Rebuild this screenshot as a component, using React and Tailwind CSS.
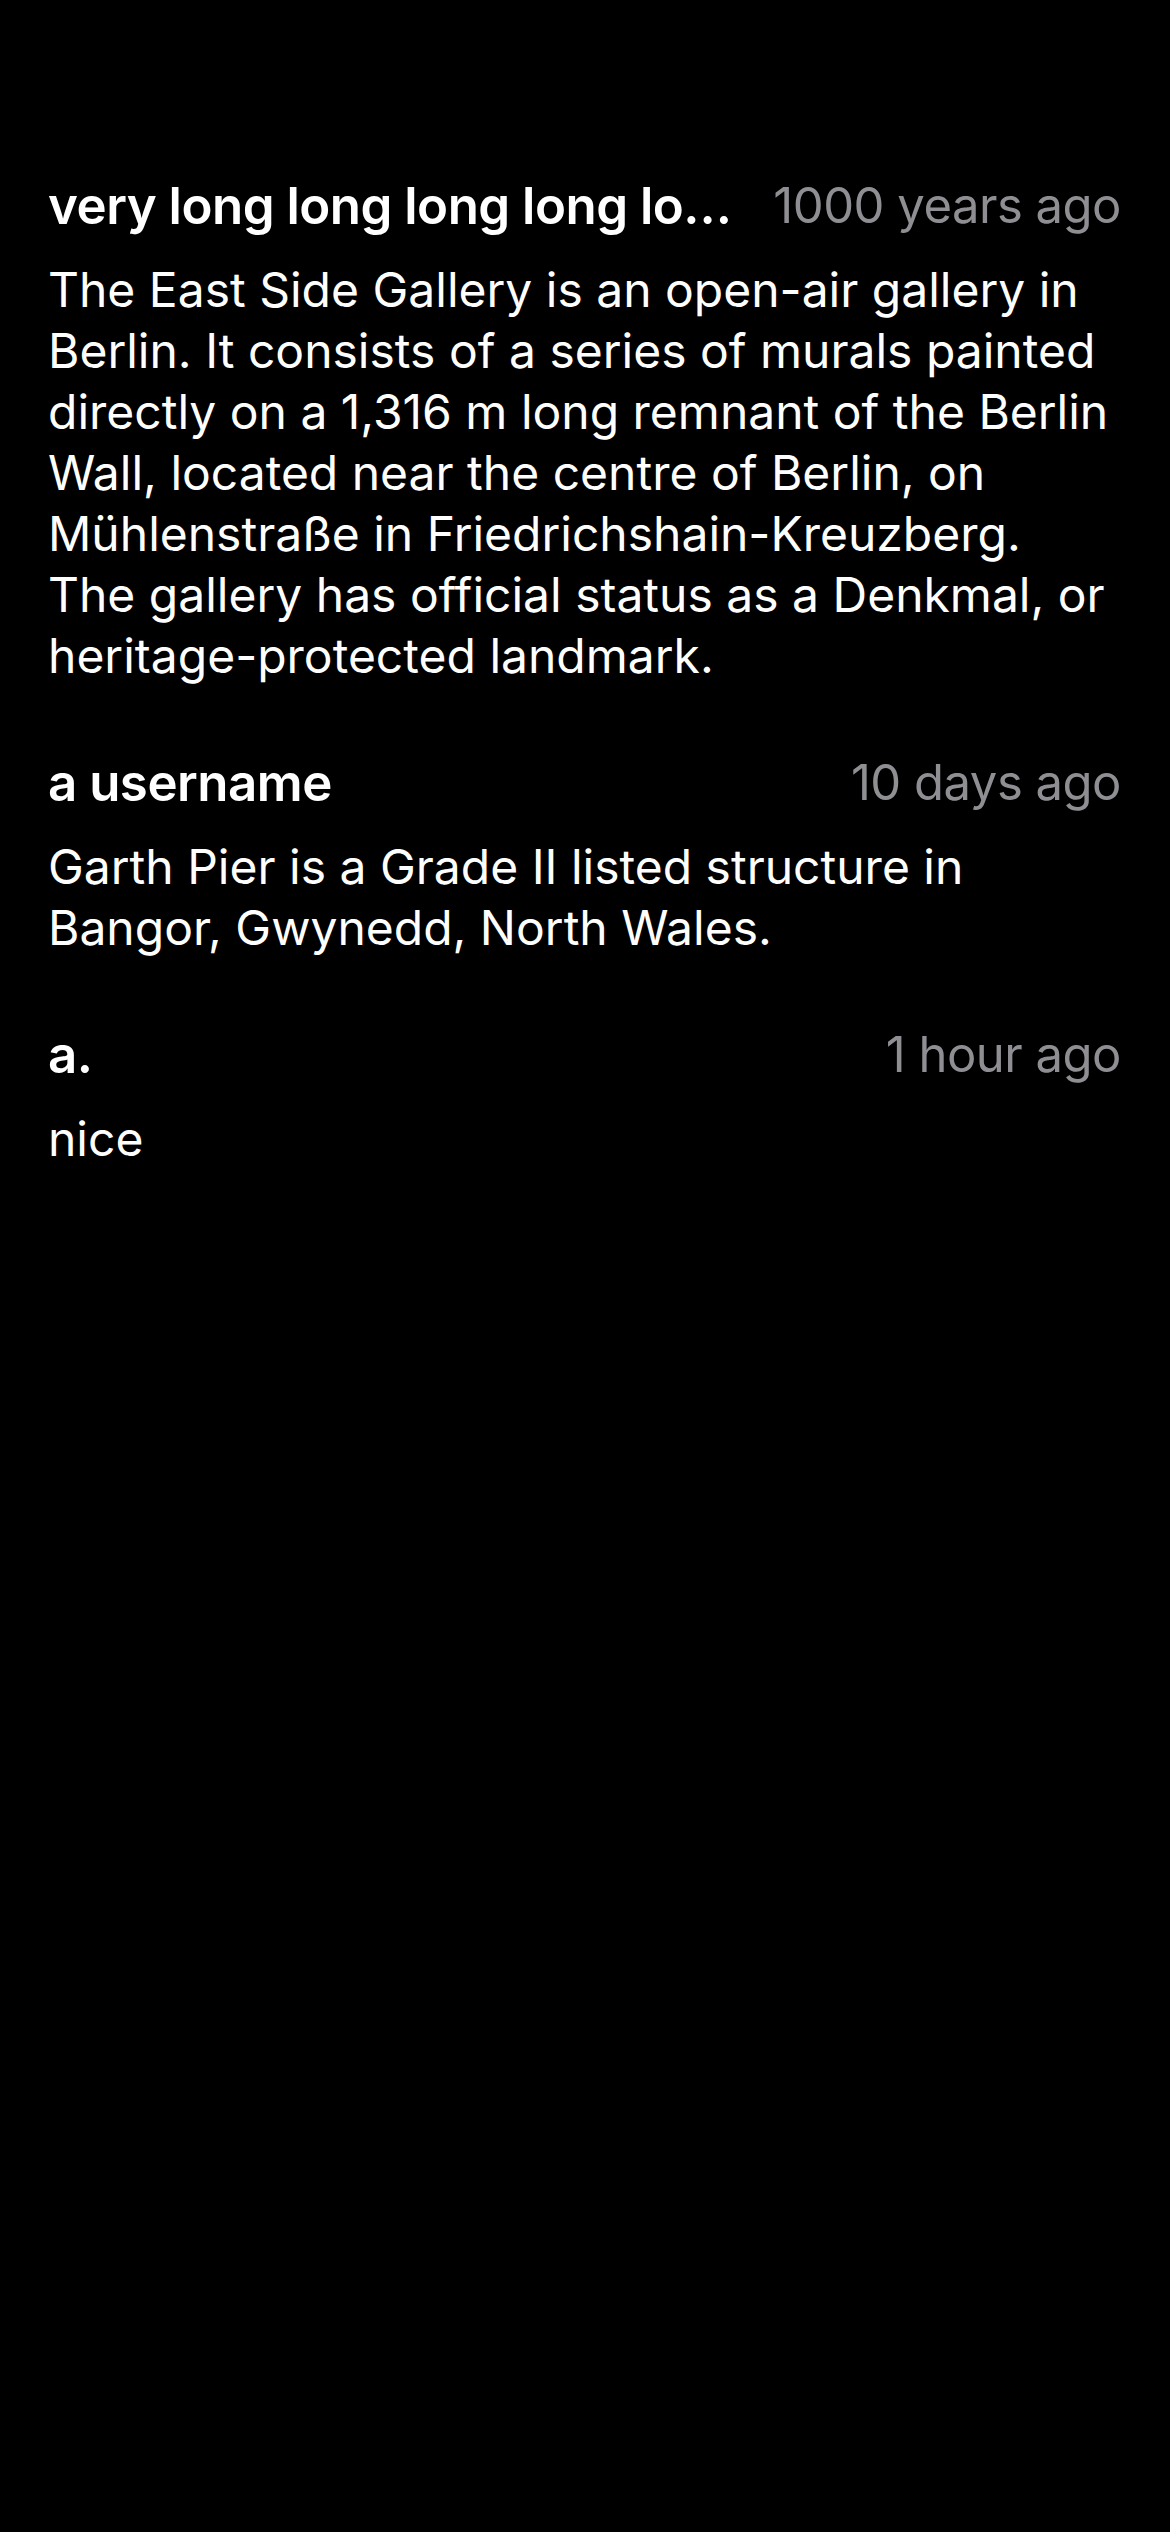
import React from 'react';

const comments = [
  {
    id: 1,
    user: 'very long long long long long long long username',
    time: '1000 years ago',
    text: 'The East Side Gallery is an open-air gallery in Berlin. It consists of a series of murals painted directly on a 1,316 m long remnant of the Berlin Wall, located near the centre of Berlin, on Mühlenstraße in Friedrichshain-Kreuzberg. The gallery has official status as a Denkmal, or heritage-protected landmark.',
  },
  {
    id: 2,
    user: 'a username',
    time: '10 days ago',
    text: 'Garth Pier is a Grade II listed structure in Bangor, Gwynedd, North Wales.',
  },
  { id: 3, user: 'a.', time: '1 hour ago', text: 'nice' },
];

const App = () => {
  return (
    <div
      className="min-h-[2532px] w-[1170px] bg-black text-white pl-[48px] pr-[49px] pt-[175px]"
      style={{ fontFamily: 'Inter, "Noto Sans", sans-serif' }}
    >
      <div className="flex flex-col gap-[66px]">
        {comments.map(c => (
          <div key={c.id} className="flex flex-col gap-[23px]">
            <div className="flex items-center gap-[40px] leading-[61px]">
              <span className="flex-1 min-w-0 truncate text-[51px] font-semibold tracking-[-0.5px]">{c.user}</span>
              <span className="shrink-0 text-[49px] text-[#8e8e93] tracking-[-0.5px]">{c.time}</span>
            </div>
            <p className="text-[48px] leading-[61px]">{c.text}</p>
          </div>
        ))}
      </div>
    </div>
  );
};

export default App;
